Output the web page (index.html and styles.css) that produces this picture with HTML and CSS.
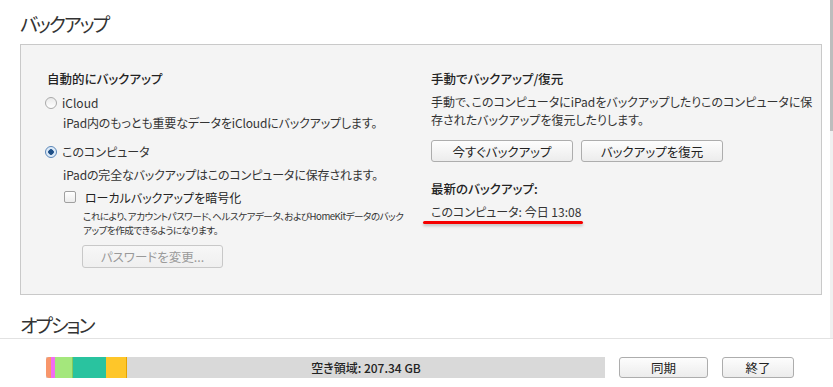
FILE: index.html
```html
<!DOCTYPE html>
<html lang="ja">
<head>
<meta charset="utf-8">
<title>バックアップ</title>
<link rel="stylesheet" href="styles.css">
</head>
<body>
<div class="app">
  <div class="pane">
    <div class="content">
      <h2 class="section-title">バックアップ</h2>
      <div class="box">
        <div class="col col-left">
          <div class="heading">自動的にバックアップ</div>
          <div class="radio-row r1"><span class="radio"></span><span>iCloud</span></div>
          <div class="desc">iPad内のもっとも重要なデータをiCloudにバックアップします。</div>
          <div class="radio-row r2"><span class="radio checked"></span><span>このコンピュータ</span></div>
          <div class="desc d2">iPadの完全なバックアップはこのコンピュータに保存されます。</div>
          <div class="check-row"><span class="checkbox"></span><span>ローカルバックアップを暗号化</span></div>
          <div class="small">これにより、アカウントパスワード、ヘルスケアデータ、およびHomeKitデータのバック<br>アップを作成できるようになります。</div>
          <div class="btn btn-disabled btn-pw">パスワードを変更...</div>
        </div>
        <div class="col col-right">
          <div class="heading">手動でバックアップ/復元</div>
          <div class="para">手動で、このコンピュータにiPadをバックアップしたりこのコンピュータに保<br>存されたバックアップを復元したりします。</div>
          <div class="btn-row">
            <div class="btn btn-now">今すぐバックアップ</div>
            <div class="btn btn-restore">バックアップを復元</div>
          </div>
          <div class="heading latest">最新のバックアップ:</div>
          <div class="latest-val"><span class="mark">このコンピュータ: 今日 13:08</span></div>
        </div>
      </div>
      <h2 class="section-title options">オプション</h2>
    </div>
    <div class="scrollbar"><div class="thumb"></div></div>
  </div>
  <div class="footer">
    <div class="storage">
      <span class="seg s-orange"></span><span class="seg s-pink"></span><span class="seg s-green"></span><span class="seg s-teal"></span><span class="seg s-yellow"></span>
      <span class="free">空き領域: 207.34 GB</span>
    </div>
    <div class="btn btn-sync">同期</div>
    <div class="btn btn-done">終了</div>
  </div>
</div>
</body>
</html>
```
FILE: styles.css
```css
html, body {
  margin: 0;
  padding: 0;
  background: #ffffff;
}
body {
  font-family: "Noto Sans CJK JP", "Noto Sans", sans-serif;
  font-feature-settings: "palt" 1;
  color: #333333;
  font-size: 12px;
}
.app {
  width: 833px;
  height: 387px;
  display: flex;
  flex-direction: column;
  overflow: hidden;
}
.pane {
  height: 339px;
  box-sizing: border-box;
  display: flex;
  border-bottom: 1px solid #e2e2e2;
  flex: none;
}
.content {
  flex: 1;
  padding-left: 20px;
  padding-right: 8px;
  overflow: hidden;
}
.scrollbar {
  width: 3px;
  background: #f0f0f0;
  flex: none;
}
.thumb {
  height: 131px;
  background: #bdbdbd;
}
.section-title {
  margin: 0;
  font-weight: normal;
  font-size: 19px;
  line-height: 24px;
  color: #333;
  padding-top: 12px;
  height: 44px;
  box-sizing: border-box;
  letter-spacing: -2px;
}
.section-title.options {
  padding-top: 18px;
  height: 43px;
}
.box {
  height: 251px;
  box-sizing: border-box;
  border: 1px solid #c9c9c9;
  background: #f4f4f4;
  display: flex;
  padding: 25px 0 0 26px;
}
.col-left {
  width: 384px;
  flex: none;
  white-space: nowrap;
}
.col-right {
  flex: 1;
  white-space: nowrap;
}
.heading {
  font-size: 12.5px;
  line-height: 18px;
  font-weight: 500;
  color: #222;
}
.radio-row {
  display: flex;
  align-items: center;
  height: 18px;
  line-height: 18px;
  margin-left: -2px;
  color: #333;
}
.r1 { margin-top: 6px; }
.r2 { margin-top: 11px; }
.radio {
  width: 12px;
  height: 12px;
  box-sizing: border-box;
  border-radius: 50%;
  border: 1px solid #a9a9a9;
  background: linear-gradient(#eaeaea, #ffffff);
  margin-right: 5px;
  position: relative;
  flex: none;
}
.radio.checked {
  border-color: #5a86b8;
  background: radial-gradient(circle, #1f4f86 0 2.5px, #d6e6f6 3px, #eef5fc 100%);
}
.desc {
  margin-left: 16px;
  line-height: 19px;
  margin-top: 1px;
  letter-spacing: -0.15px;
}
.desc.d2 { margin-top: 4px; }
.check-row {
  display: flex;
  align-items: center;
  height: 18px;
  margin-top: 4px;
  margin-left: 17px;
  font-size: 12px;
  color: #222;
}
.checkbox {
  width: 12px;
  height: 12px;
  box-sizing: border-box;
  border: 1px solid #a0a0a0;
  border-radius: 2px;
  background: linear-gradient(#ffffff, #ececec);
  margin-right: 9px;
  flex: none;
}
.small {
  margin-left: 36px;
  font-size: 9.6px;
  line-height: 14px;
  margin-top: 3px;
  letter-spacing: -0.5px;
}
.btn {
  box-sizing: border-box;
  border: 1px solid #adadad;
  border-radius: 3px;
  background: linear-gradient(#fdfdfd, #ececec);
  display: flex;
  align-items: center;
  justify-content: center;
  color: #222;
  font-size: 12.5px;
}
.btn-pw {
  margin-left: 35px;
  margin-top: 8px;
  width: 141px;
  height: 23px;
  color: #9a9a9a;
  border-color: #c8c8c8;
  background: linear-gradient(#f7f7f7, #efefef);
}
.para {
  margin-top: 5px;
  line-height: 18px;
}
.btn-row {
  display: flex;
  gap: 8px;
  margin-top: 11px;
}
.btn-now { width: 142px; height: 22px; }
.btn-restore { width: 142px; height: 22px; }
.latest { margin-top: 18px; }
.latest-val {
  margin-top: 5px;
  line-height: 18px;
}
.mark {
  position: relative;
  display: inline-block;
}
.mark::after {
  content: "";
  position: absolute;
  left: -8px;
  right: -2px;
  top: 18px;
  height: 3px;
  border-radius: 2px;
  background: #f50000;
  box-shadow: 0 2px 3px rgba(0,0,0,0.22);
}
.footer {
  flex: 1;
  display: flex;
  align-items: flex-start;
  padding-top: 18px;
  padding-left: 46px;
}
.storage {
  width: 559px;
  height: 21px;
  display: flex;
  background: #d9d9d9;
  margin-right: 14px;
}
.seg { height: 100%; display: block; flex: none; }
.s-orange { width: 5px; background: #f8966b; border-radius: 3px 0 0 3px; }
.s-pink { width: 4px; background: #f26cf2; }
.s-green { width: 17px; background: #a4e77c; border-right: 1px solid #86c95e; }
.s-teal { width: 33px; background: #29c39f; }
.s-yellow { width: 20px; background: #fec629; border-right: 1px solid #e5a400; }
.free {
  flex: 1;
  text-align: center;
  line-height: 21px;
  font-size: 12px;
  font-weight: 500;
  color: #222;
}
.btn-sync { width: 89px; height: 21px; margin-right: 14px; }
.btn-done { width: 72px; height: 21px; }
```
